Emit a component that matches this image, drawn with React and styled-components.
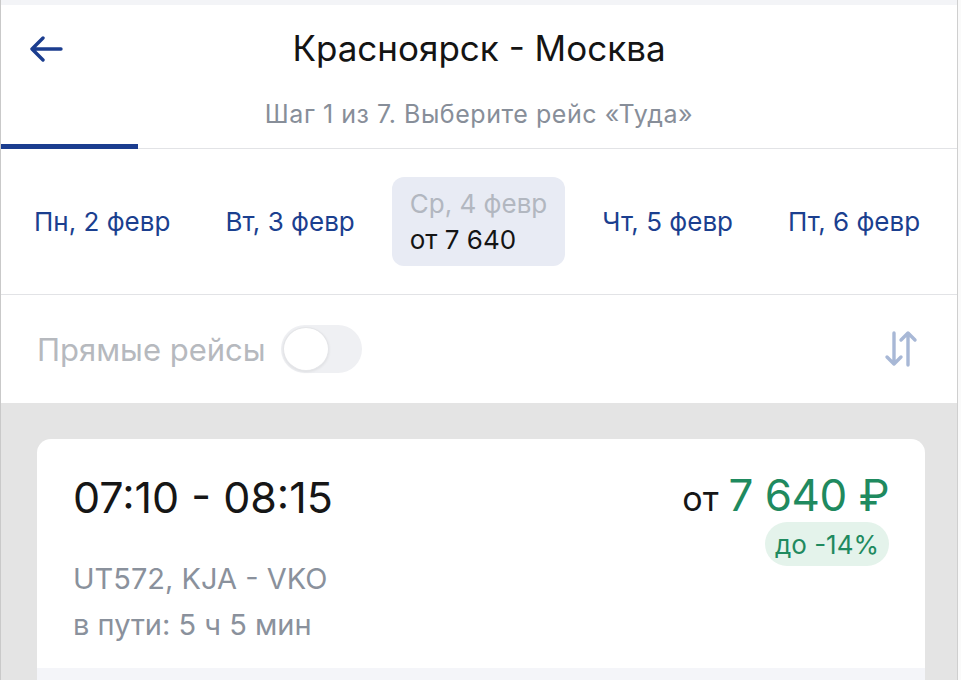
import React from "react";
import styled, { createGlobalStyle } from "styled-components";

const Global = createGlobalStyle`
  html, body { margin: 0; padding: 0; background: #fafafa; }
  body { font-family: Inter, "Noto Sans", sans-serif; -webkit-font-smoothing: antialiased; }
  * { box-sizing: border-box; }
`;

const Page = styled.div`
  width: 958px;
  height: 680px;
  overflow: hidden;
  border-left: 1px solid #c9c9c9;
  border-right: 1px solid #cfcfcf;
  display: flex;
  flex-direction: column;
  background: #fff;
  & > * { flex-shrink: 0; }
`;

const TopStrip = styled.div`
  height: 5px;
  background: #f3f4f7;
`;

const Header = styled.header`
  position: relative;
  height: 144px;
  display: flex;
  flex-direction: column;
  align-items: center;
  border-bottom: 1px solid #e2e3e6;
`;

const BackBtn = styled.button`
  position: absolute;
  left: 26px;
  top: 26px;
  width: 38px;
  height: 36px;
  border: 0;
  background: none;
  padding: 0;
  display: flex;
  align-items: center;
  justify-content: center;
`;

const Title = styled.h1`
  margin: 22px 0 0;
  font-size: 35px;
  font-weight: 400;
  color: #141414;
  line-height: 42px;
`;

const Subtitle = styled.div`
  margin-top: 30px;
  font-size: 25px;
  color: #878e99;
  line-height: 30px;
  letter-spacing: 0.55px;
`;

const TabIndicator = styled.div`
  position: absolute;
  left: -1px;
  bottom: -1px;
  width: 138px;
  height: 5px;
  background: #1b3d8f;
`;

const DateRow = styled.nav`
  height: 146px;
  display: flex;
  align-items: center;
  padding-left: 15px;
  gap: 19px;
  border-bottom: 1px solid #e2e3e6;
`;

const DateItem = styled.div`
  padding: 0 18px;
  height: 89px;
  display: flex;
  flex-direction: column;
  justify-content: center;
  border-radius: 12px;
  background: ${(p) => (p.$active ? "#e8ebf4" : "transparent")};
  color: #1b3f8f;
  font-size: 26px;
  line-height: 36px;
  white-space: nowrap;
`;

const DateLabel = styled.span`
  color: ${(p) => (p.$muted ? "#b2b7c0" : "inherit")};
`;

const DatePrice = styled.span`
  color: #141414;
`;

const FilterRow = styled.div`
  height: 108px;
  display: flex;
  align-items: center;
  padding: 0 37px 0 36px;
`;

const FilterLabel = styled.span`
  font-size: 31px;
  color: #b6b9be;
`;

const Toggle = styled.div`
  margin-left: 15px;
  width: 81px;
  height: 48px;
  border-radius: 24px;
  background: #eff0f3;
  padding: 2px;
  display: flex;
`;

const Knob = styled.div`
  width: 46px;
  height: 44px;
  border-radius: 50%;
  background: #fff;
  border: 1px solid #e4e5e8;
  box-shadow: 0 1px 3px rgba(0, 0, 0, 0.08);
`;

const SortBtn = styled.button`
  margin-left: auto;
  border: 0;
  background: none;
  padding: 0;
  width: 38px;
  height: 44px;
  display: flex;
  align-items: center;
  justify-content: center;
`;

const Results = styled.main`
  flex: 1 1 auto !important;
  min-height: 0;
  overflow: hidden;
  background: #e4e4e4;
  padding: 36px 32px 0 36px;
`;

const Card = styled.article`
  background: #fff;
  border-radius: 14px 14px 0 0;
  overflow: hidden;
`;

const CardBody = styled.div`
  height: 229px;
  display: flex;
  justify-content: space-between;
  padding: 32px 36px 0 36px;
`;

const CardFooter = styled.div`
  height: 20px;
  background: #f4f5f9;
`;

const LeftCol = styled.div`
  display: flex;
  flex-direction: column;
`;

const Times = styled.div`
  font-size: 43px;
  color: #161616;
  line-height: 52px;
`;

const Meta = styled.div`
  font-size: 29px;
  color: #8a919c;
  line-height: 46px;
  margin-top: ${(p) => p.$mt || 0}px;
`;

const RightCol = styled.div`
  display: flex;
  flex-direction: column;
  align-items: flex-end;
`;

const PriceLine = styled.div`
  display: flex;
  align-items: baseline;
  gap: 10px;
  line-height: 48px;
`;

const From = styled.span`
  font-size: 34px;
  color: #161616;
`;

const Price = styled.span`
  font-size: 44px;
  color: #1f8a5f;
  letter-spacing: -0.5px;
`;

const Badge = styled.span`
  margin-top: -1px;
  height: 44px;
  padding: 0 10px;
  border-radius: 22px;
  background: #e4f3eb;
  color: #1f8a5f;
  font-size: 26px;
  display: flex;
  align-items: center;
`;

const dates = [
  { label: "Пн, 2 февр" },
  { label: "Вт, 3 февр" },
  { label: "Ср, 4 февр", price: "от 7 640", active: true },
  { label: "Чт, 5 февр" },
  { label: "Пт, 6 февр" },
];

export default function App() {
  return (
    <>
      <Global />
      <Page>
        <TopStrip />
        <Header>
          <BackBtn aria-label="Назад">
            <svg width="34" height="26" viewBox="0 0 34 26" fill="none">
              <path d="M32 13H4M14 2L3 13l11 11" stroke="#1b3d8f" strokeWidth="3.4" strokeLinecap="round" strokeLinejoin="round" />
            </svg>
          </BackBtn>
          <Title>Красноярск - Москва</Title>
          <Subtitle>Шаг 1 из 7. Выберите рейс «Туда»</Subtitle>
          <TabIndicator />
        </Header>
        <DateRow>
          {dates.map((d) => (
            <DateItem key={d.label} $active={d.active}>
              <DateLabel $muted={d.active}>{d.label}</DateLabel>
              {d.price && <DatePrice>{d.price}</DatePrice>}
            </DateItem>
          ))}
        </DateRow>
        <FilterRow>
          <FilterLabel>Прямые рейсы</FilterLabel>
          <Toggle>
            <Knob />
          </Toggle>
          <SortBtn aria-label="Сортировка">
            <svg width="36" height="38" viewBox="0 0 36 38" fill="none">
              <path d="M11 3v31M4 27l7 7 7-7" stroke="#a8b8d6" strokeWidth="3.4" strokeLinecap="round" strokeLinejoin="round" />
              <path d="M25 35V3M18 10l7-7 7 7" stroke="#a8b8d6" strokeWidth="3.4" strokeLinecap="round" strokeLinejoin="round" />
            </svg>
          </SortBtn>
        </FilterRow>
        <Results>
          <Card>
            <CardBody>
              <LeftCol>
                <Times>07:10 - 08:15</Times>
                <Meta $mt={33}>UT572, KJA - VKO</Meta>
                <Meta>в пути: 5 ч 5 мин</Meta>
              </LeftCol>
              <RightCol>
                <PriceLine>
                  <From>от</From>
                  <Price>7 640 ₽</Price>
                </PriceLine>
                <Badge>до -14%</Badge>
              </RightCol>
            </CardBody>
            <CardFooter />
          </Card>
        </Results>
      </Page>
    </>
  );
}
